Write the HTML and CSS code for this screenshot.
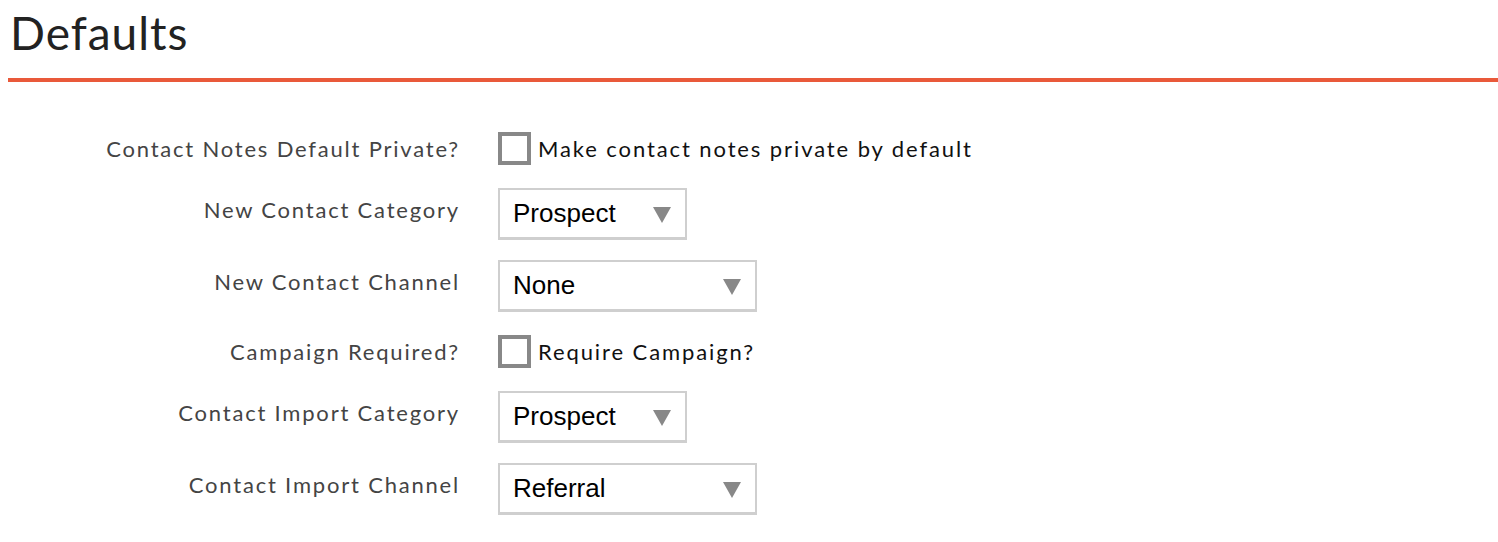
FILE: index.html
```html
<!DOCTYPE html>
<html>
<head>
<meta charset="utf-8">
<link rel="stylesheet" href="styles.css">
</head>
<body>
<div class="page">
  <h1 class="title">Defaults</h1>
  <div class="form">
    <div class="row row-check">
      <div class="label">Contact Notes Default Private?</div>
      <label class="check"><span class="box"></span><span class="check-text">Make contact notes private by default</span></label>
    </div>
    <div class="row">
      <div class="label label-select">New Contact Category</div>
      <div class="select w-short"><span class="value">Prospect</span><svg class="arrow" width="18" height="16" viewBox="0 0 18 16"><polygon points="0,0 18,0 9,16" fill="#888"/></svg></div>
    </div>
    <div class="row">
      <div class="label label-select">New Contact Channel</div>
      <div class="select w-long"><span class="value">None</span><svg class="arrow" width="18" height="16" viewBox="0 0 18 16"><polygon points="0,0 18,0 9,16" fill="#888"/></svg></div>
    </div>
    <div class="row row-check">
      <div class="label">Campaign Required?</div>
      <label class="check"><span class="box"></span><span class="check-text">Require Campaign?</span></label>
    </div>
    <div class="row">
      <div class="label label-select">Contact Import Category</div>
      <div class="select w-short"><span class="value">Prospect</span><svg class="arrow" width="18" height="16" viewBox="0 0 18 16"><polygon points="0,0 18,0 9,16" fill="#888"/></svg></div>
    </div>
    <div class="row">
      <div class="label label-select">Contact Import Channel</div>
      <div class="select w-long"><span class="value">Referral</span><svg class="arrow" width="18" height="16" viewBox="0 0 18 16"><polygon points="0,0 18,0 9,16" fill="#888"/></svg></div>
    </div>
  </div>
</div>
</body>
</html>
```
FILE: styles.css
```css
html, body {
  margin: 0;
  padding: 0;
  background: #fff;
}

.page {
  padding-left: 8px;
  font-family: "Lato", "Liberation Sans", sans-serif;
}

.title {
  margin: 5px 0 0 0;
  padding: 0 0 18px 2px;
  font-size: 46px;
  line-height: 55px;
  font-weight: 400;
  letter-spacing: 1px;
  color: #222;
  border-bottom: 4px solid #e9593a;
}

.form {
  display: flex;
  flex-direction: column;
  gap: 20px;
  padding-top: 47px;
}

.row {
  display: grid;
  grid-template-columns: 450px auto;
  column-gap: 40px;
  align-items: center;
  justify-items: start;
}

.row-check {
  padding: 3px 0;
}

.label {
  justify-self: end;
  margin-right: -2px;
  font-size: 22px;
  line-height: 26px;
  letter-spacing: 1.8px;
  color: #444;
  text-align: right;
}

.label-select {
  padding-bottom: 8px;
}

.check {
  display: flex;
  align-items: center;
}

.box {
  width: 25px;
  height: 25px;
  border: 4px solid #888;
  background: #fff;
}

.check-text {
  margin-left: 7px;
  font-size: 22px;
  letter-spacing: 1.9px;
  color: #111;
}

.select {
  box-sizing: border-box;
  height: 52px;
  display: flex;
  align-items: center;
  justify-content: space-between;
  padding: 0 14px 0 13px;
  border: 2px solid #cfcfcf;
  border-bottom-width: 3px;
  background: #fff;
  font-family: "Liberation Sans", Arial, sans-serif;
  font-size: 26px;
  color: #000;
}

.w-short { width: 189px; }
.w-long { width: 259px; }

.arrow {
  display: block;
  margin-top: 2px;
}
```
